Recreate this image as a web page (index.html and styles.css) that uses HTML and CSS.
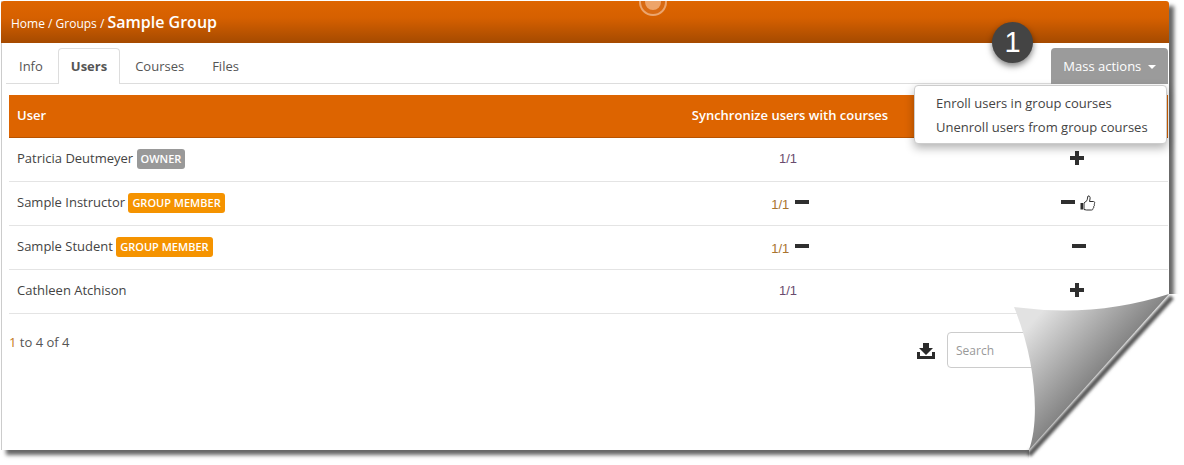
FILE: index.html
```html
<!DOCTYPE html>
<html lang="en">
<head>
  <meta charset="UTF-8">
  <meta name="viewport" content="width=device-width, initial-scale=1.0">
  <title>Sample Group</title>
  <link rel="stylesheet" href="styles.css">
</head>
<body>
  <svg class="icon-defs" aria-hidden="true">
    <symbol id="i-plus" viewBox="0 0 14 14"><path d="M5 0h4v5h5v4H9v5H5V9H0V5h5z"/></symbol>
    <symbol id="i-minus" viewBox="0 0 14 4"><path d="M0 0h14v4H0z"/></symbol>
  </svg>

  <div class="sheet">
    <!-- Header -->
    <div class="page-header">
      <span class="crumbs">Home / Groups / </span><span class="page-title">Sample Group</span>
    </div>
    <span class="header-dot"></span>

    <!-- Tabs -->
    <div class="tab-bar">
      <a class="tab">Info</a>
      <a class="tab tab-active">Users</a>
      <a class="tab">Courses</a>
      <a class="tab">Files</a>
      <div class="mass-actions">
        <button class="mass-button">Mass actions <span class="caret"></span></button>
        <div class="mass-menu">
          <a class="mass-item">Enroll users in group courses</a>
          <a class="mass-item">Unenroll users from group courses</a>
        </div>
      </div>
    </div>
    <span class="callout">1</span>

    <!-- Users table -->
    <table class="users-table">
      <colgroup>
        <col class="col-user">
        <col class="col-sync">
        <col class="col-action">
      </colgroup>
      <thead>
        <tr>
          <th>User</th>
          <th class="center head-sync">Synchronize users with courses</th>
          <th class="center"></th>
        </tr>
      </thead>
      <tbody>
        <tr>
          <td>Patricia Deutmeyer <span class="badge badge-owner">OWNER</span></td>
          <td class="center cell-raised"><span class="ratio">1/1</span></td>
          <td class="center cell-action cell-raised"><svg class="icon icon-plus"><use href="#i-plus"/></svg></td>
        </tr>
        <tr>
          <td>Sample Instructor <span class="badge badge-member">GROUP MEMBER</span></td>
          <td class="center"><span class="ratio ratio-warm">1/1</span> <svg class="icon icon-minus sync-minus"><use href="#i-minus"/></svg></td>
          <td class="center cell-action">
            <svg class="icon icon-minus"><use href="#i-minus"/></svg>
            <svg class="icon-thumb" viewBox="0 0 16 16"><path class="thumb-cuff" d="M.5 8h2.500v6.500H.5z"/><path class="thumb-line" d="M4 8l3-2.500c.5-1.500.5-3.500 1-4.500 1.500-.5 2.500 1 2 3l-.5 2.500h4c1.500 0 1.500 2 .5 2.500.8 1 .5 2-.3 2.300.3 1-.1 1.700-.7 2 0 1.200-.5 1.700-1.500 1.700h-5L4 14.500z"/></svg>
          </td>
        </tr>
        <tr>
          <td>Sample Student <span class="badge badge-member">GROUP MEMBER</span></td>
          <td class="center"><span class="ratio ratio-warm">1/1</span> <svg class="icon icon-minus sync-minus"><use href="#i-minus"/></svg></td>
          <td class="center cell-action"><svg class="icon icon-minus"><use href="#i-minus"/></svg></td>
        </tr>
        <tr>
          <td class="cell-raised">Cathleen Atchison</td>
          <td class="center cell-raised"><span class="ratio">1/1</span></td>
          <td class="center cell-action cell-raised"><svg class="icon icon-plus"><use href="#i-plus"/></svg></td>
        </tr>
      </tbody>
    </table>

    <!-- Footer -->
    <div class="table-footer">
      <div class="table-count"><span class="count-first">1</span> to 4 of 4</div>
      <div class="table-tools">
        <svg class="icon-download" viewBox="0 0 20 16"><path d="M7 0h6v5h4l-7 7-7-7h4z"/><path d="M1 9h3v4h12V9h3v7H1z"/></svg>
        <input class="search-box" type="text" placeholder="Search">
      </div>
    </div>

    <!-- Page curl -->
    <svg class="page-curl" viewBox="0 0 170 175">
      <defs>
        <linearGradient id="curlFill" gradientUnits="userSpaceOnUse" x1="20" y1="30" x2="95" y2="98">
          <stop offset="0" stop-color="#e2e2e2"/>
          <stop offset="0.82" stop-color="#858585"/>
        </linearGradient>
        <filter id="curlBlur" x="-10%" y="-10%" width="120%" height="120%">
          <feGaussianBlur stdDeviation="1.800"/>
        </filter>
      </defs>
      <path fill="#fff" d="M15 160L155 4h15v171H15z"/>
      <path fill="none" stroke="#555" stroke-width="5" filter="url(#curlBlur)" d="M15 165L158 7"/>
      <path fill="url(#curlFill)" d="M15 160C26 130 22 70 0 17Q81 28 155 4z"/>
    </svg>
  </div>
</body>
</html>
```

FILE: styles.css
```css
html, body {
  margin: 0;
  padding: 0;
  height: 100%;
  overflow: hidden;
  background: #fff;
}

body {
  font-family: 'Open Sans', sans-serif;
  font-size: 13px;
  color: #444;
}

.icon-defs {
  display: none;
}

.sheet {
  position: relative;
  width: 1168px;
  height: 449px;
  margin: 1px 0 0 1px;
  background: #fff;
  box-shadow: inset 1px 0 0 #ccc, 5px 5px 4px rgba(0, 0, 0, 0.6);
}

/* Header */
.page-header {
  height: 42px;
  padding-left: 10px;
  line-height: 42px;
  color: #fff;
  border-radius: 3px 3px 0 0;
  background: linear-gradient(#de6500, #d66000 40%, #a54a00);
}

.crumbs {
  font-size: 12px;
}

.page-title {
  font-size: 16px;
  font-weight: 600;
}

.header-dot {
  position: absolute;
  left: 644px;
  top: -7px;
  width: 16px;
  height: 16px;
  border-radius: 50%;
  background: #eda46a;
  box-shadow: 0 0 0 4px #d96a12, 0 0 0 6px #eba56e;
  clip-path: inset(7px -8px -8px -8px);
}

/* Tabs */
.tab-bar {
  display: flex;
  align-items: flex-end;
  height: 35px;
  margin: 5px 1px 0 5px;
  border-bottom: 1px solid #ddd;
}

.tab {
  height: 35px;
  margin: 0 2px -1px 0;
  padding: 0 12px;
  line-height: 32px;
  border: 1px solid transparent;
  border-width: 1px 1px 0;
  box-sizing: border-box;
  border-radius: 4px 4px 0 0;
  color: #555;
}

.tab-active {
  height: 36px;
  line-height: 34px;
  font-weight: 700;
  color: #555;
  background: #fff;
  border-color: #ddd;
}

.mass-actions {
  position: relative;
  margin-left: auto;
}

.mass-button {
  display: block;
  width: 117px;
  height: 36px;
  margin-bottom: -1px;
  padding: 0;
  font-family: inherit;
  font-size: 13px;
  color: #fff;
  background: #9b9b9b;
  border: none;
  border-radius: 4px 4px 0 0;
}

.caret {
  display: inline-block;
  margin-left: 3px;
  vertical-align: 2px;
  border-top: 4px solid #fff;
  border-left: 4px solid transparent;
  border-right: 4px solid transparent;
}

.mass-menu {
  position: absolute;
  top: 37px;
  right: 1px;
  z-index: 5;
  width: 253px;
  padding: 5px 0 4px;
  box-sizing: border-box;
  background: #fff;
  border: 1px solid #ccc;
  border-radius: 4px;
  box-shadow: 0 4px 10px rgba(0, 0, 0, 0.3);
}

.mass-item {
  display: block;
  padding: 0 20px 0 21px;
  line-height: 24px;
  white-space: nowrap;
}

.callout {
  position: absolute;
  left: 991px;
  top: 21px;
  z-index: 6;
  width: 41px;
  height: 41px;
  font-family: 'Liberation Sans', sans-serif;
  font-size: 29px;
  line-height: 41px;
  text-align: center;
  color: #fff;
  background: #444;
  border-radius: 50%;
  box-shadow: 0 3px 6px rgba(0, 0, 0, 0.5);
}

/* Users table */
.users-table {
  width: 1159px;
  margin: 11px 0 0 8px;
  border-collapse: separate;
  border-spacing: 0;
  table-layout: fixed;
}

.col-user {
  width: 583px;
}

.col-sync {
  width: 394px;
}

.col-action {
  width: 182px;
}

.users-table th {
  height: 43px;
  padding: 0 8px 2px;
  box-sizing: border-box;
  font-weight: 600;
  text-align: left;
  color: #fff;
  background: #dd6400;
  border-bottom: 1px solid #b85300;
}

.users-table td {
  height: 44px;
  padding: 0 8px 2px;
  box-sizing: border-box;
  border-bottom: 1px solid #e4e4e4;
}

.users-table .center {
  text-align: center;
}

.users-table .head-sync {
  padding-left: 10px;
}

.users-table .cell-action {
  padding-left: 11px;
}

.users-table .cell-raised {
  padding-bottom: 4px;
}

.badge {
  display: inline-block;
  height: 20px;
  padding: 0 4px;
  font-size: 11px;
  font-weight: 600;
  line-height: 20px;
  color: #fff;
  border-radius: 3px;
}

.badge-owner {
  background: #999;
}

.badge-member {
  background: #f59300;
}

.ratio {
  margin-right: 2px;
  font-family: 'Liberation Sans', sans-serif;
  font-size: 13px;
  color: #6a4a6e;
}

.ratio-warm {
  position: relative;
  top: 1px;
  margin-right: 0;
  color: #a8742f;
}

.count-first {
  color: #c47a20;
}

.icon {
  fill: #2f2f2f;
}

.icon-plus {
  width: 14px;
  height: 14px;
  margin-right: 3px;
  vertical-align: -2px;
}

.icon-minus {
  width: 14px;
  height: 4px;
  vertical-align: 4px;
}

.sync-minus {
  margin: 0 -2px 0 2px;
}

.icon-thumb {
  width: 16px;
  height: 16px;
  margin-left: 1px;
  vertical-align: -3px;
}

.thumb-cuff {
  fill: #2f2f2f;
}

.thumb-line {
  fill: none;
  stroke: #2f2f2f;
  stroke-width: 1;
}

/* Footer */
.table-footer {
  display: flex;
  justify-content: space-between;
  align-items: flex-start;
  margin: 18px 1px 0 8px;
}

.table-count {
  margin-top: 1px;
  color: #555;
}

.table-tools {
  display: flex;
  align-items: center;
  gap: 11px;
}

.icon-download {
  width: 20px;
  height: 16px;
  margin-top: 2px;
  fill: #2b2b2b;
}

.search-box {
  width: 221px;
  height: 36px;
  padding: 0 8px;
  box-sizing: border-box;
  font-family: inherit;
  font-size: 12px;
  border: 1px solid #ccc;
  border-radius: 4px;
}

.search-box::placeholder {
  color: #999;
}

/* Page curl over the bottom right corner */
.page-curl {
  position: absolute;
  right: -15px;
  bottom: -15px;
  z-index: 4;
  width: 170px;
  height: 175px;
}
```
